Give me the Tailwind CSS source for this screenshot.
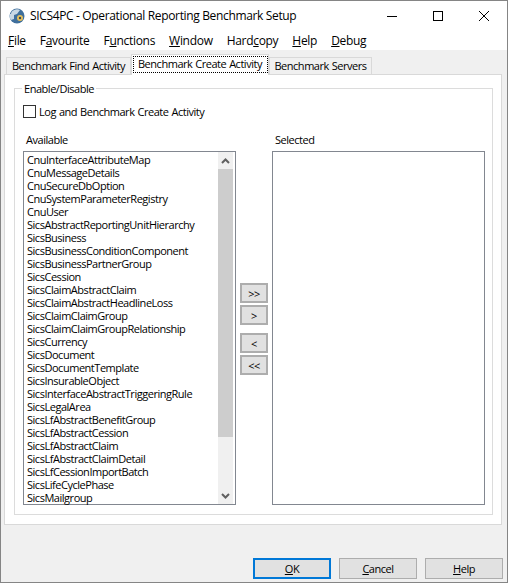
<!DOCTYPE html>
<html><head><meta charset="utf-8"><script src="https://cdn.jsdelivr.net/npm/@tailwindcss/browser@4"></script></head>
<body class="m-0">
<div class="w-[508px] h-[583px] flex flex-col bg-[#f0f0f0] border border-[#858585] text-[11px] leading-[13px] text-black font-['Open_Sans','Liberation_Sans',sans-serif] tracking-[-0.47px] overflow-hidden whitespace-nowrap">
  <div class="h-[29px] bg-white flex items-center shrink-0 text-[12px] tracking-[-0.35px]">
    <svg class="ml-[8px] w-[16px] h-[16px]" viewBox="0 0 16 16"><circle cx="8" cy="8" r="7.5" fill="#3f6f9c"/><path d="M2 6a6 5 0 0 1 9-4l-3 4-3 1 0 4-3 1a6 6 0 0 1-1-6z" fill="#c9d8e4"/><circle cx="11" cy="10" r="3" fill="#e8c15a"/><circle cx="11" cy="10" r="1.2" fill="#33475b"/></svg>
    <span class="ml-[5px]">SICS4PC - Operational Reporting Benchmark Setup</span>
    <div class="ml-auto flex items-center">
      <svg class="w-[46px] h-[29px]" viewBox="0 0 46 29"><path d="M18 15.5h10" stroke="#000"/></svg>
      <svg class="w-[46px] h-[29px]" viewBox="0 0 46 29"><rect x="18.5" y="10.5" width="9" height="9" fill="none" stroke="#000"/></svg>
      <svg class="w-[46px] h-[29px]" viewBox="0 0 46 29"><path d="M18 10l10 10M28 10l-10 10" stroke="#000" fill="none"/></svg>
    </div>
  </div>
  <div class="h-[20px] bg-white flex items-center pl-[7px] gap-[14px] shrink-0 text-[12px] tracking-[-0.3px]">
    <span><u>F</u>ile</span><span>F<u>a</u>vourite</span><span>F<u>u</u>nctions</span><span><u>W</u>indow</span><span>Hard<u>c</u>opy</span><span><u>H</u>elp</span><span><u>D</u>ebug</span>
  </div>
  <div class="relative h-[24px] shrink-0 flex items-end pl-[5px] [word-spacing:0.5px]">
    <div class="w-[125px] h-[17px] pb-[2px] bg-[#f0f0f0] border border-b-0 border-[#d9d9d9] flex items-center justify-center">Benchmark Find Activity</div>
    <div class="relative z-10 w-[138px] h-[21px] mb-[-1px] bg-white border border-b-0 border-[#d9d9d9] flex items-start justify-center pt-[1px]">
      <span class="w-[135px] h-[17px] pb-[2px] border border-dotted border-black flex items-center justify-center">Benchmark Create Activity</span>
    </div>
    <div class="w-[103px] h-[17px] pb-[2px] bg-[#f0f0f0] border border-b-0 border-[#d9d9d9] flex items-center justify-center">Benchmark Servers</div>
  </div>
  <div class="ml-[3px] w-[498px] h-[451px] bg-white border border-[#d9d9d9] p-[9px] pr-[7px] shrink-0">
    <div class="relative w-[479px] h-[427px] mt-[4px] border border-[#dcdcdc] pt-[16px] pl-[8px]">
      <span class="absolute left-[7px] top-[-7px] bg-white px-[2px]">Enable/Disable</span>
      <label class="flex items-center h-[13px]">
        <span class="w-[13px] h-[13px] border border-[#333] bg-white"></span>
        <span class="ml-[3px] mt-[-1px] [word-spacing:0.6px]">Log and Benchmark Create Activity</span>
      </label>
      <div class="flex mt-[15px]">
        <div class="w-[213px]">
          <div class="h-[13px] pl-[3px]">Available</div>
          <div class="mt-[5px] h-[354px] border border-[#828790] flex">
            <div class="flex-1 pl-[3px] pt-[1px]">
              <div>CnuInterfaceAttributeMap</div><div>CnuMessageDetails</div><div>CnuSecureDbOption</div><div>CnuSystemParameterRegistry</div><div>CnuUser</div><div>SicsAbstractReportingUnitHierarchy</div><div>SicsBusiness</div><div>SicsBusinessConditionComponent</div><div>SicsBusinessPartnerGroup</div><div>SicsCession</div><div>SicsClaimAbstractClaim</div><div>SicsClaimAbstractHeadlineLoss</div><div>SicsClaimClaimGroup</div><div>SicsClaimClaimGroupRelationship</div><div>SicsCurrency</div><div>SicsDocument</div><div>SicsDocumentTemplate</div><div>SicsInsurableObject</div><div>SicsInterfaceAbstractTriggeringRule</div><div>SicsLegalArea</div><div>SicsLfAbstractBenefitGroup</div><div>SicsLfAbstractCession</div><div>SicsLfAbstractClaim</div><div>SicsLfAbstractClaimDetail</div><div>SicsLfCessionImportBatch</div><div>SicsLifeCyclePhase</div><div>SicsMailgroup</div>
            </div>
            <div class="w-[15px] mr-[2px] bg-[#f0f0f0] flex flex-col">
              <div class="h-[17px] flex items-center justify-center"><svg class="w-[9px] h-[6px]" viewBox="0 0 9 6"><path d="M1 5l3.5-3.5L8 5" stroke="#606060" stroke-width="2" fill="none"/></svg></div>
              <div class="h-[268px] bg-[#cdcdcd]"></div>
              <div class="flex-1"></div>
              <div class="h-[17px] flex items-center justify-center"><svg class="w-[9px] h-[6px]" viewBox="0 0 9 6"><path d="M1 1l3.5 3.5L8 1" stroke="#606060" stroke-width="2" fill="none"/></svg></div>
            </div>
          </div>
        </div>
        <div class="w-[36px] flex flex-col items-center pt-[150px] gap-[2px]">
          <button class="w-[28px] h-[20px] bg-[#e1e1e1] border-2 border-[#adadad] flex items-center justify-center">&gt;&gt;</button>
          <button class="w-[28px] h-[20px] bg-[#e1e1e1] border-2 border-[#adadad] flex items-center justify-center">&gt;</button>
          <button class="w-[28px] h-[20px] mt-[6px] bg-[#e1e1e1] border-2 border-[#adadad] flex items-center justify-center">&lt;</button>
          <button class="w-[28px] h-[20px] bg-[#e1e1e1] border-2 border-[#adadad] flex items-center justify-center">&lt;&lt;</button>
        </div>
        <div class="w-[213px]">
          <div class="h-[13px] pl-[3px]">Selected</div>
          <div class="mt-[5px] h-[354px] border border-[#828790]"></div>
        </div>
      </div>
    </div>
  </div>
  <div class="flex justify-end gap-[8px] pr-[4px] mt-[33px]">
    <button class="w-[78px] h-[21px] pb-[1px] bg-[#e1e1e1] border-2 border-[#0078d7] flex items-center justify-center"><span><u>O</u>K</span></button>
    <button class="w-[78px] h-[21px] pb-[1px] bg-[#e1e1e1] border border-[#adadad] flex items-center justify-center"><span><u>C</u>ancel</span></button>
    <button class="w-[78px] h-[21px] pb-[1px] bg-[#e1e1e1] border border-[#adadad] flex items-center justify-center"><span><u>H</u>elp</span></button>
  </div>
</div>
</body></html>
